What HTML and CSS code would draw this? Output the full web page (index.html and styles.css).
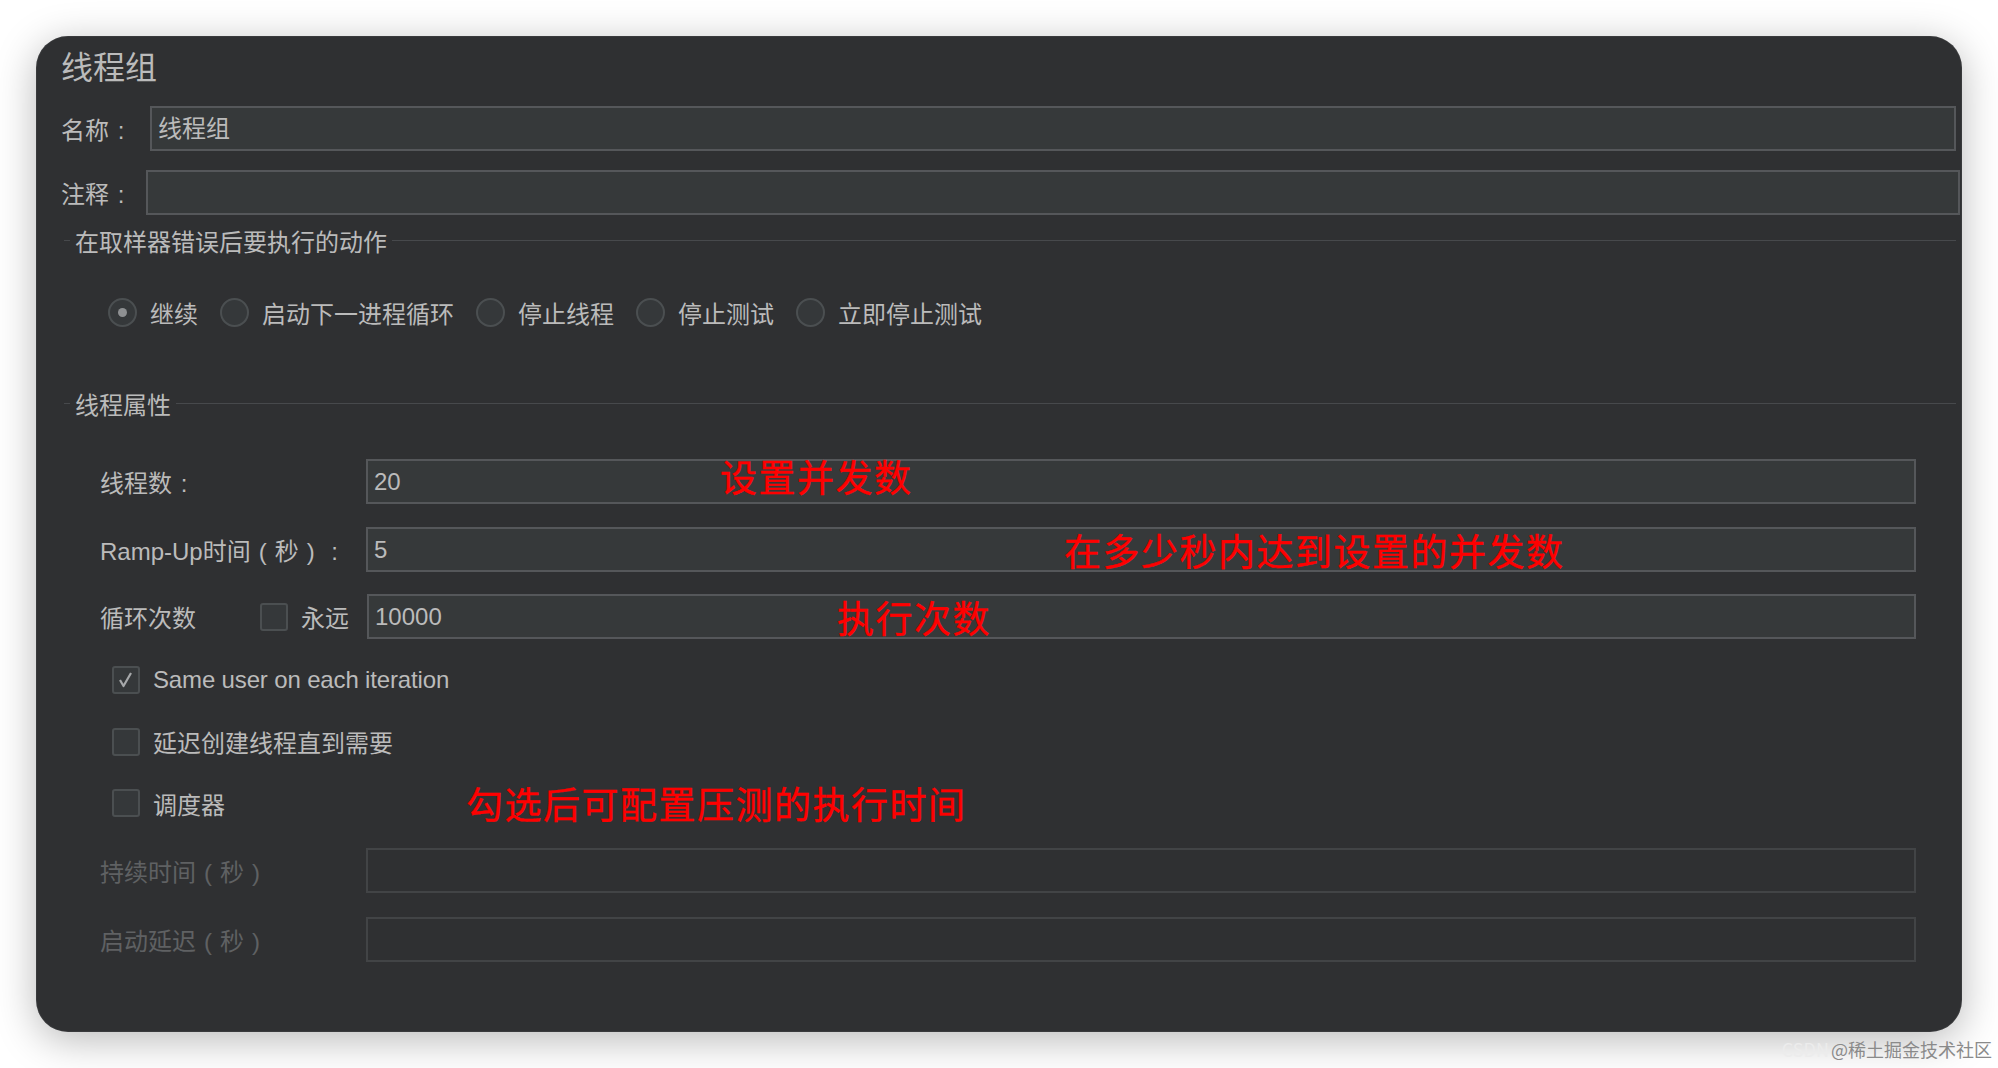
FILE: index.html
```html
<!DOCTYPE html>
<html lang="zh-CN">
<head>
  <meta charset="UTF-8">
  <meta name="viewport" content="width=device-width, initial-scale=1.0">
  <title>线程组</title>
  <link rel="stylesheet" href="styles.css">
</head>
<body>

  <div class="panel">
    <h1 class="panel__title">线程组</h1>

    <div class="row row--name">
      <span class="label">名称<span class="pn">:</span></span>
      <div class="field">线程组</div>
    </div>
    <div class="row row--comment">
      <span class="label">注释<span class="pn">:</span></span>
      <div class="field"></div>
    </div>

    <!-- 取样器出错后的动作 -->
    <div class="legend legend--error"><span>在取样器错误后要执行的动作</span></div>
    <div class="radios">
      <label class="radio is-checked"><span class="radio__dot"></span>继续</label>
      <label class="radio"><span class="radio__dot"></span>启动下一进程循环</label>
      <label class="radio"><span class="radio__dot"></span>停止线程</label>
      <label class="radio"><span class="radio__dot"></span>停止测试</label>
      <label class="radio"><span class="radio__dot"></span>立即停止测试</label>
    </div>

    <!-- 线程属性 -->
    <div class="legend legend--props"><span>线程属性</span></div>
    <div class="props">
      <div class="prop">
        <span class="prop__label">线程数<span class="pn">:</span></span>
        <div class="field">20</div>
      </div>
      <div class="prop">
        <span class="prop__label">Ramp-Up时间<span class="pn">(</span>秒<span class="pn">)</span><span class="pn">:</span></span>
        <div class="field">5</div>
      </div>
      <div class="prop">
        <span class="prop__label prop__label--loop">循环次数</span>
        <label class="check"><span class="check__box"></span>永远</label>
        <div class="field">10000</div>
      </div>
    </div>

    <div class="checks">
      <label class="check">
        <span class="check__box">
          <svg width="20" height="20" viewBox="0 0 20 20"><polyline points="4,10 7.5,16 15,3" /></svg>
        </span><span class="check__text">Same user on each iteration</span>
      </label>
      <label class="check"><span class="check__box"></span>延迟创建线程直到需要</label>
      <label class="check"><span class="check__box"></span>调度器</label>
    </div>

    <!-- 调度器未勾选时禁用 -->
    <div class="props props--off">
      <div class="prop">
        <span class="prop__label">持续时间<span class="pn">(</span>秒<span class="pn">)</span></span>
        <div class="field"></div>
      </div>
      <div class="prop">
        <span class="prop__label">启动延迟<span class="pn">(</span>秒<span class="pn">)</span></span>
        <div class="field"></div>
      </div>
    </div>

    <span class="note note--threads">设置并发数</span>
    <span class="note note--ramp">在多少秒内达到设置的并发数</span>
    <span class="note note--loops">执行次数</span>
    <span class="note note--sched">勾选后可配置压测的执行时间</span>
  </div>

  <div class="mark"><span class="mark__csdn">CSDN</span>@稀土掘金技术社区</div>

</body>
</html>
```

FILE: styles.css
```css
* { padding:0; margin:0; box-sizing:border-box; }

:root {
  --color-page: #ffffff;
  --color-panel: #2f3032;
  --color-field: #36393a;
  --color-field-border: #55575a;
  --color-field-off: #424446;
  --color-text: #bbbbbb;
  --color-text-off: #5f6163;
  --color-line: #47494c;
  --color-control: #35383a;
  --color-control-border: #4b4f51;
  --color-note: #ff0000;

  --font-ui: "Liberation Sans", "Noto Sans CJK SC", sans-serif;
  --font-cjk: "Noto Sans CJK SC", sans-serif;
  --font-size: 24px;
  --size-field: 45px;
  --size-control: 29px;
}

body {
  background-color: var(--color-page);
  padding: 36px;
  font-family: var(--font-ui);
  font-size: var(--font-size);
  color: var(--color-text);
}

.panel {
  position: relative;
  display: flex;
  flex-direction: column;
  width: 1926px;
  height: 996px;
  background-color: var(--color-panel);
  border-radius: 32px;
  box-shadow: inset 0 0 0 1px rgba(255, 255, 255, 0.05), 0 8px 40px rgba(0, 0, 0, 0.28);
  overflow: hidden;
}

.panel__title {
  margin: 12px 0 0 25px;
  font-size: 32px;
  line-height: 40px;
  font-weight: normal;
}

/* full-width punctuation sits centred in its own cell */
.pn {
  display: inline-block;
  width: 1em;
  text-align: center;
}

.row {
  display: flex;
  align-items: center;
  height: var(--size-field);
  padding-left: 25px;
}

.row--name {
  margin-top: 18px;
  gap: 17px;
  padding-right: 6px;
}

.row--comment {
  margin-top: 19px;
  gap: 13px;
  padding-right: 2px;
}

.field {
  flex: 1;
  height: 100%;
  padding-left: 6px;
  line-height: 41px;
  background-color: var(--color-field);
  border: 2px solid var(--color-field-border);
}

.legend {
  display: flex;
  align-items: center;
  gap: 5px;
  height: 30px;
  padding: 0 6px 0 28px;
}

.legend::before,
.legend::after {
  content: "";
  border-top: 1px solid var(--color-line);
}

.legend::before { width: 6px; }
.legend::after { flex: 1; }

.legend--error { margin-top: 10px; }
.legend--props { margin-top: 61px; }

.radios {
  display: flex;
  align-items: center;
  gap: 22px;
  height: 30px;
  margin-top: 42px;
  padding-left: 72px;
}

.radio {
  display: flex;
  align-items: center;
  gap: 13px;
}

.radio__dot {
  display: flex;
  align-items: center;
  justify-content: center;
  width: var(--size-control);
  height: var(--size-control);
  border-radius: 50%;
  border: 2px solid var(--color-control-border);
  background-color: var(--color-control);
}

.radio.is-checked .radio__dot::after {
  content: "";
  width: 9px;
  height: 9px;
  border-radius: 50%;
  background-color: #8e9092;
}

.props {
  display: flex;
  flex-direction: column;
  gap: 22.5px;
  margin-top: 41px;
  padding: 0 46px 0 64px;
}

.prop {
  display: flex;
  align-items: center;
  height: var(--size-field);
}

.prop__label { width: 266px; }
.prop__label--loop { width: 160px; }

.prop .check {
  height: auto;
  margin-right: 18px;
}

.checks {
  display: flex;
  flex-direction: column;
  gap: 31.5px;
  margin-top: 26px;
  padding-left: 76px;
}

.check {
  display: flex;
  align-items: center;
  gap: 13px;
  height: 30px;
}

.check__text {
  letter-spacing: -0.15px;
}

.check__box {
  display: flex;
  align-items: center;
  justify-content: center;
  width: 28px;
  height: 28px;
  border: 2px solid var(--color-control-border);
  border-radius: 3px;
  background-color: var(--color-control);
}

.check__box polyline {
  fill: none;
  stroke: #a6a8aa;
  stroke-width: 2.2;
  stroke-linejoin: round;
}

.props--off {
  gap: 24px;
  margin-top: 30px;
  color: var(--color-text-off);
}

.props--off .field {
  background-color: transparent;
  border-color: var(--color-field-off);
}

/* red hand-written notes over the form */
.note {
  position: absolute;
  font-family: var(--font-cjk);
  font-size: 37px;
  line-height: 37px;
  letter-spacing: 1.5px;
  color: var(--color-note);
  -webkit-text-stroke: 0.4px var(--color-note);
  white-space: nowrap;
}

.note--threads { left: 684px; top: 422px; }
.note--ramp { left: 1028px; top: 496px; }
.note--loops { left: 801px; top: 563px; }
.note--sched { left: 430px; top: 749px; }

.mark {
  position: absolute;
  right: 6px;
  bottom: 8px;
  font-family: var(--font-cjk);
  font-size: 18px;
  line-height: 22px;
  color: #8a8a8a;
}

.mark__csdn {
  margin-right: 2px;
  color: #ececec;
}
```
